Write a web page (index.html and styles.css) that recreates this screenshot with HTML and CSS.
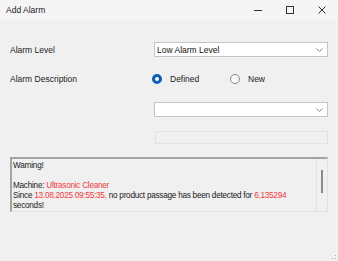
FILE: index.html
```html
<!DOCTYPE html>
<html lang="en">
<head>
    <meta charset="UTF-8">
    <title>Add Alarm</title>
    <link rel="stylesheet" href="styles.css">
</head>
<body>
<div class="window">
    <div class="title-bar">
        <span class="title-text">Add Alarm</span>
        <div class="title-btns">
            <span class="tb-btn">
                <svg width="10" height="10" viewBox="0 0 10 10"><path d="M1 5.5h8" stroke="#333" stroke-width="1"/></svg>
            </span>
            <span class="tb-btn">
                <svg width="10" height="10" viewBox="0 0 10 10"><rect x="1.5" y="1.5" width="7" height="7" fill="none" stroke="#333" stroke-width="1"/></svg>
            </span>
            <span class="tb-btn">
                <svg width="10" height="10" viewBox="0 0 10 10"><path d="M1.5 1.5l7 7M8.5 1.5l-7 7" stroke="#333" stroke-width="1"/></svg>
            </span>
        </div>
    </div>

    <div class="form">
        <div class="row row-level">
            <span class="label">Alarm Level</span>
            <div class="combo">
                <span class="combo-text">Low Alarm Level</span>
                <svg class="chev" width="7" height="4" viewBox="0 0 7 4"><path d="M0.5 0.5l3 3 3-3" fill="none" stroke="#888" stroke-width="1"/></svg>
            </div>
        </div>
        <div class="row row-desc">
            <span class="label">Alarm Description</span>
            <div class="radios">
                <span class="radio radio-on"><span class="dot dot-on"></span>Defined</span>
                <span class="radio"><span class="dot"></span>New</span>
            </div>
        </div>
        <div class="row row-combo2">
            <span class="label"></span>
            <div class="combo">
                <span class="combo-text"></span>
                <svg class="chev" width="7" height="4" viewBox="0 0 7 4"><path d="M0.5 0.5l3 3 3-3" fill="none" stroke="#888" stroke-width="1"/></svg>
            </div>
        </div>
        <div class="row row-text">
            <span class="label"></span>
            <div class="textbox-off"></div>
        </div>

        <div class="memo">
            <div class="memo-text">Warning!<br><br>Machine: <span class="red">Ultrasonic Cleaner</span><br>Since <span class="red">13.08.2025 09:55:35,</span> no product passage has been detected for <span class="red">6.135294</span><br>seconds!</div>
            <div class="memo-scroll"><span class="thumb"></span></div>
        </div>
    </div>
    <div class="grip">
        <svg width="5" height="5" viewBox="0 0 5 5"><rect x="3" y="3" width="1" height="1" fill="#aaa"/><rect x="0" y="3" width="1" height="1" fill="#aaa"/><rect x="3" y="0" width="1" height="1" fill="#aaa"/></svg>
    </div>
</div>
</body>
</html>
```

FILE: styles.css
```css
*{
    box-sizing: border-box;
}
body{
    margin: 0;
    font-family: "Liberation Sans", Arial, sans-serif;
    font-size: 8.5px;
    color: #1a1a1a;
    background-color: #f0f0f0;
}
.window{
    width: 338px;
    height: 261px;
    position: relative;
    background-color: #f0f0f0;
}
.title-bar{
    height: 20px;
    display: flex;
    align-items: center;
    justify-content: space-between;
    background-color: #f5f5f5;
    padding-left: 6px;
}
.title-text{
    font-size: 8.5px;
    color: #222;
}
.title-btns{
    display: flex;
    height: 20px;
}
.tb-btn{
    width: 32px;
    height: 20px;
    display: flex;
    align-items: center;
    justify-content: center;
}
.form{
    display: flex;
    flex-direction: column;
    padding: 0 10px;
}
.row{
    display: flex;
    align-items: center;
}
.label{
    width: 144px;
    flex-shrink: 0;
}
.row-level{
    margin-top: 22px;
}
.row-desc{
    margin-top: 15px;
    height: 14px;
}
.row-combo2{
    margin-top: 16px;
}
.row-text{
    margin-top: 14px;
}
.combo{
    flex: 1;
    height: 15px;
    background-color: #fff;
    border: 1px solid #c4c4c4;
    display: flex;
    align-items: center;
    justify-content: space-between;
    padding: 0 4px 0 2px;
}
.combo-text{
    color: #111;
}
.chev{
    display: block;
}
.radios{
    display: flex;
    align-items: center;
}
.radio{
    display: flex;
    align-items: center;
    width: 80px;
    margin-left: -2px;
}
.dot{
    width: 10px;
    height: 10px;
    border-radius: 50%;
    border: 1px solid #8a8a8a;
    background-color: #f7f7f7;
    margin-right: 8px;
}
.dot-on{
    border: 3px solid #0a5fb4;
    background-color: #fff;
}
.textbox-off{
    flex: 1;
    height: 13px;
    border: 1px solid #e2e2e2;
    margin-left: 1px;
}
.memo{
    margin-top: 13px;
    height: 55px;
    display: flex;
    border-top: 2px solid #a4a4a4;
    border-left: 2px solid #a4a4a4;
    border-right: 1px solid #e2e2e2;
    border-bottom: 1px solid #e2e2e2;
}
.memo-text{
    flex: 1;
    padding: 2px 0 0 1px;
    font-size: 8.2px;
    letter-spacing: -0.25px;
    line-height: 10px;
    white-space: nowrap;
}
.red{
    color: #f0383c;
}
.memo-scroll{
    width: 11px;
    border-left: 1px solid #e4e4e4;
    display: flex;
    justify-content: center;
    padding-top: 11px;
}
.thumb{
    width: 2px;
    height: 23px;
    background-color: #8a8a8a;
}
.grip{
    position: absolute;
    right: 1px;
    bottom: 1px;
    width: 5px;
    height: 5px;
}
.grip svg{
    display: block;
}
```
